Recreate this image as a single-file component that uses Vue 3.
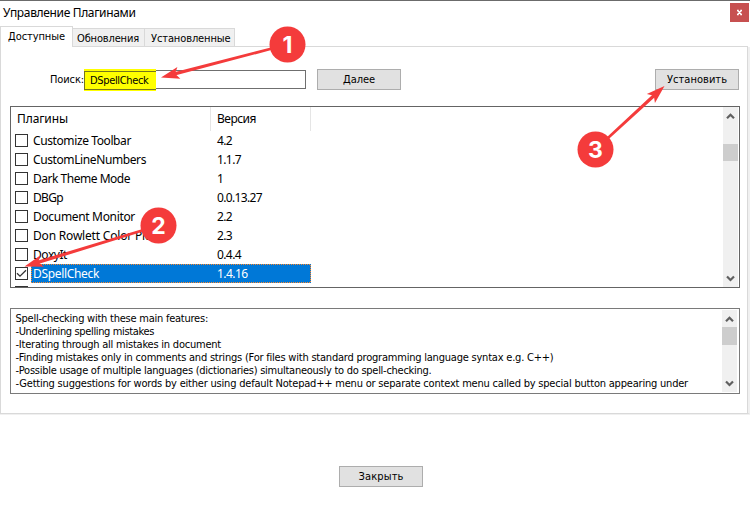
<script setup>
const plugins = [
  { name: 'Customize Toolbar', w: 98, version: '4.2', vw: 15 },
  { name: 'CustomLineNumbers', w: 113, version: '1.1.7', vw: 24 },
  { name: 'Dark Theme Mode', w: 97, version: '1', vw: 6 },
  { name: 'DBGp', w: 30, version: '0.0.13.27', vw: 45 },
  { name: 'Document Monitor', w: 102, version: '2.2', vw: 15 },
  { name: 'Don Rowlett Color Picker', w: 135, version: '2.3', vw: 15 },
  { name: 'DoxyIt', w: 34, version: '0.4.4', vw: 24 },
  { name: 'DSpellCheck', w: 66, version: '1.4.16', vw: 30.5, selected: true },
]

const description = [
  { text: 'Spell-checking with these main features:', w: 192.5 },
  { text: '-Underlining spelling mistakes', w: 138.5 },
  { text: '-Iterating through all mistakes in document', w: 205.5 },
  { text: '-Finding mistakes only in comments and strings (For files with standard programming language syntax e.g. C++)', w: 538 },
  { text: '-Possible usage of multiple languages (dictionaries) simultaneously to do spell-checking.', w: 416 },
  { text: '-Getting suggestions for words by either using default Notepad++ menu or separate context menu called by special button appearing under', w: 672.5 },
]

const steps = [
  { n: 1, x: 287.5, y: 44.5, tx: 161, ty: 77.5 },
  { n: 2, x: 158.5, y: 225.5, tx: 24.5, ty: 266.5 },
  { n: 3, x: 595.5, y: 149.5, tx: 664.5, ty: 86 },
].map((s) => ({
  ...s,
  angle: (Math.atan2(s.ty - s.y, s.tx - s.x) * 180) / Math.PI,
  len: Math.hypot(s.tx - s.x, s.ty - s.y),
}))

// Tracks a label so that it fills the given width in pixels
const vFit = {
  mounted(el, { value }) {
    const width = el.getBoundingClientRect().width
    el.style.letterSpacing = `${(value - width) / el.textContent.length}px`
  },
}
</script>

<template>
  <div class="window">
    <header class="titlebar">
      <span v-fit="132.5" class="title">Управление Плагинами</span>
      <button class="close" aria-label="Закрыть">
        <svg width="7" height="7" viewBox="0 0 7 7"><path d="M1.5 1.5L5.5 5.5M5.5 1.5L1.5 5.5M1 1.3H2.8M4.2 1.3H6M1 5.7H2.8M4.2 5.7H6" /></svg>
      </button>
    </header>

    <nav class="tabs">
      <div class="tab active"><span v-fit="57">Доступные</span></div>
      <div class="tab second"><span v-fit="62">Обновления</span></div>
      <div class="tab third"><span v-fit="79.5">Установленные</span></div>
      <div class="tab-rule"></div>
    </nav>

    <main class="panel">
      <div class="search">
        <label><span v-fit="34">Поиск:</span></label>
        <div class="field">
          <div class="mark"><span v-fit="58.5">DSpellCheck</span></div>
        </div>
        <button class="btn"><span v-fit="32">Далее</span></button>
        <button class="btn install"><span v-fit="60">Установить</span></button>
      </div>

      <section class="list">
        <div class="table">
          <div class="head">
            <div class="col-name"><span v-fit="51">Плагины</span></div>
            <div class="col-version"><span v-fit="39">Версия</span></div>
          </div>
          <div v-for="p in plugins" :key="p.name" class="row">
            <div class="check">
              <svg v-if="p.selected" width="11" height="11" viewBox="0 0 11 11"><path d="M1 5.2L4 8.2L10 2.2" /></svg>
            </div>
            <div class="cells" :class="{ selected: p.selected }">
              <div class="name"><span v-fit="p.w">{{ p.name }}</span></div>
              <div><span v-fit="p.vw">{{ p.version }}</span></div>
              <svg v-if="p.selected" class="focus" width="280" height="19"><path d="M0 0.5H280M0 18.5H280M0.5 0V19M279.5 1V19" /></svg>
            </div>
          </div>
          <div class="row"><div class="check"></div></div>
        </div>
        <div class="scroll">
          <svg class="chev" width="9" height="7" viewBox="0 0 9 7"><path d="M1 5.2L4.5 1.7L8 5.2" /></svg>
          <div class="track"><div class="thumb"></div></div>
          <svg class="chev" width="9" height="7" viewBox="0 0 9 7"><path d="M1 1.5L4.5 5L8 1.5" /></svg>
        </div>
      </section>

      <section class="details">
        <div class="text">
          <div v-for="d in description" :key="d.text" class="line"><span v-fit="d.w">{{ d.text }}</span></div>
        </div>
        <div class="scroll">
          <svg class="chev" width="9" height="7" viewBox="0 0 9 7"><path d="M1 5.2L4.5 1.7L8 5.2" /></svg>
          <div class="track"><div class="thumb"></div></div>
          <svg class="chev" width="9" height="7" viewBox="0 0 9 7"><path d="M1 1.5L4.5 5L8 1.5" /></svg>
        </div>
      </section>
    </main>

    <footer class="footer">
      <button class="btn"><span v-fit="45">Закрыть</span></button>
    </footer>

    <svg class="callouts" width="750" height="514" viewBox="0 0 750 514">
      <g v-for="s in steps" :key="s.n">
        <g :transform="`translate(${s.x} ${s.y}) rotate(${s.angle})`">
          <path :d="`M0 -1.3H18L${s.len - 13} -1.7V1.7L18 1.3H0Z`" />
          <path :d="`M${s.len} 0L${s.len - 18.5} -6L${s.len - 14.5} 0L${s.len - 18.5} 6Z`" />
        </g>
        <circle :cx="s.x" :cy="s.y" r="18" />
        <text :x="s.x" :y="s.y + 8.5">{{ s.n }}</text>
      </g>
    </svg>
  </div>
</template>

<style>
body {
  margin: 0;
  background: #fff;
}
</style>

<style scoped>
.window {
  position: relative;
  box-sizing: border-box;
  width: 750px;
  height: 514px;
  overflow: hidden;
  border-top: 1px solid #6b6b6b;
  background: #fff;
  color: #000;
  font-family: "DejaVu Sans Condensed", "DejaVu Sans", sans-serif;
  font-stretch: condensed;
  font-size: 11px;
  white-space: nowrap;
}
.window * {
  box-sizing: border-box;
}
span {
  display: inline-block;
}
.titlebar {
  display: flex;
  justify-content: space-between;
  height: 25px;
  padding: 2px 1px 0 3px;
}
.title {
  font: 12px/20px "Noto Sans", sans-serif;
}
.close {
  display: flex;
  align-items: center;
  justify-content: center;
  width: 19px;
  height: 19px;
  padding: 0;
  border: 0;
  background: #c75050;
}
.close path {
  stroke: #fff;
  stroke-width: 1.3;
}
.tabs {
  display: flex;
  align-items: flex-end;
  width: 748px;
  height: 21px;
}
.tab {
  height: 19px;
  border: 1px solid #d9d9d9;
  border-left: 0;
  background: #f0f0f0;
  line-height: 19px;
}
.tab.active {
  width: 73px;
  height: 21px;
  padding-left: 7px;
  border-left: 1px solid #d9d9d9;
  border-bottom: 0;
  background: #fff;
}
.tab.second {
  width: 72px;
  padding-left: 4px;
}
.tab.third {
  width: 90px;
  padding-left: 6px;
}
.tab-rule {
  flex: 1;
  height: 1px;
  background: #d9d9d9;
}
.panel {
  width: 750px;
  height: 367px;
  padding: 21px 8px 0 9px;
  border: 1px solid #d9d9d9;
  border-top: 0;
  border-right: 2px solid #f0f0f0;
  box-shadow: inset -1px 0 #d9d9d9, 0 1px #f0f0f0;
}
.search {
  display: flex;
  align-items: center;
  height: 23px;
  padding-left: 40px;
}
label {
  width: 34px;
}
.field {
  display: flex;
  align-items: center;
  width: 222px;
  height: 19px;
  margin-right: 11px;
  border: 1px solid #6f6f6f;
}
.mark {
  height: 22px;
  width: 72px;
  margin-left: -1px;
  padding-left: 6px;
  line-height: 23px;
  background: linear-gradient(#77771c, #77771c) 0 2px / 72px 1px no-repeat,
    linear-gradient(#77771c, #77771c) 0 20px / 72px 1px no-repeat,
    linear-gradient(#77771c, #77771c) 0 2px / 1px 18px no-repeat, #ff0;
}
.btn {
  width: 84px;
  height: 21px;
  padding: 0;
  border: 1px solid #adadad;
  background: #e1e1e1;
  color: #000;
  font: inherit;
  line-height: 20px;
}
.install {
  margin-left: 254px;
}
.list {
  display: flex;
  justify-content: space-between;
  width: 730px;
  height: 182px;
  margin-top: 15px;
  border: 1px solid #646464;
  overflow: hidden;
  font: 12px "Noto Sans", sans-serif;
}
.table {
  height: 180px;
  overflow: hidden;
}
.head {
  display: flex;
  height: 24px;
  line-height: 24px;
}
.col-name {
  width: 200px;
  padding-left: 6px;
  border-right: 1px solid #e5e5e5;
}
.col-version {
  width: 100px;
  padding-left: 6px;
  border-right: 1px solid #e5e5e5;
}
.row {
  display: flex;
  align-items: center;
  height: 19px;
  padding-left: 4px;
}
.check {
  display: flex;
  width: 13px;
  height: 13px;
  margin-right: 3px;
  border: 1px solid #333;
  background: #fff;
}
.check path {
  fill: none;
  stroke: #333;
  stroke-width: 1.3;
}
.cells {
  position: relative;
  display: flex;
  width: 280px;
  height: 19px;
  padding-left: 2px;
  line-height: 19px;
}
.cells.selected {
  background: #0078d7;
  color: #fff;
}
.focus {
  position: absolute;
  inset: 0;
  fill: none;
  stroke: #ff8728;
  stroke-dasharray: 1 1;
}
.name {
  width: 184px;
}
.scroll {
  display: flex;
  flex-direction: column;
  align-items: center;
  width: 15px;
  padding: 6px 0 5px;
  background: #f0f0f0;
}
.chev path {
  fill: none;
  stroke: #606060;
  stroke-width: 2.2;
}
.track {
  flex: 1;
  width: 15px;
}
.thumb {
  width: 15px;
  height: 17px;
  background: #cdcdcd;
}
.list .scroll {
  margin-right: 1px;
}
.list .thumb {
  margin-top: 24px;
}
.details {
  display: flex;
  justify-content: space-between;
  width: 730px;
  height: 86px;
  margin-top: 20px;
  padding: 1px 2px 1px 4.5px;
  border: 1px solid #7a7a7a;
}
.text {
  padding-top: 2px;
}
.line {
  height: 13px;
  line-height: 13px;
}
.details .thumb {
  height: 18px;
  margin-top: 4px;
}
.footer {
  padding: 52px 0 0 339px;
}
.callouts {
  position: absolute;
  left: 0;
  top: -1px;
  fill: #f43b3b;
}
.callouts text {
  fill: #fff;
  font: bold 23px Inter, sans-serif;
  text-anchor: middle;
}
</style>
